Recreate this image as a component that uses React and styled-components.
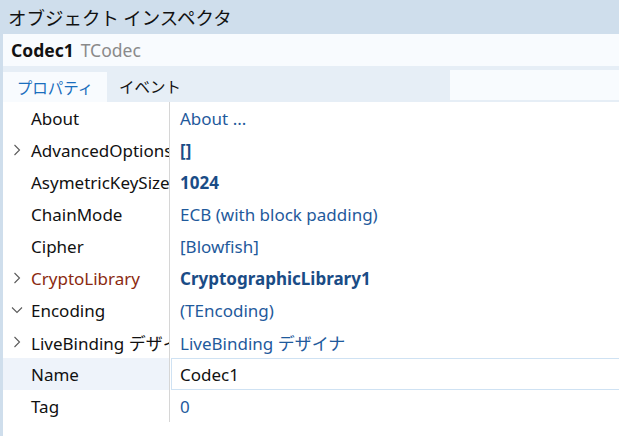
import React from "react";
import styled, { createGlobalStyle } from "styled-components";

const GlobalStyle = createGlobalStyle`
  html, body {
    margin: 0;
    padding: 0;
    background: #ffffff;
  }
  body {
    font-family: "Noto Sans", "Noto Sans CJK JP", sans-serif;
  }
`;

const Frame = styled.div`
  width: 619px;
  height: 436px;
  overflow: hidden;
  display: flex;
  flex-direction: column;
  background: #cfdeec;
`;

const TitleBar = styled.div`
  height: 34px;
  display: flex;
  align-items: center;
  padding-left: 8px;
  font-size: 18.5px;
  color: #111;
  font-family: "Noto Sans CJK JP", sans-serif;
`;

const Body = styled.div`
  flex: 1;
  margin-left: 3px;
  display: flex;
  flex-direction: column;
  background: #ffffff;
`;

const ComponentBar = styled.div`
  height: 32px;
  display: flex;
  align-items: center;
  gap: 7px;
  padding-left: 8px;
  background: #f8fbfe;
  font-size: 17.5px;
`;

const CompName = styled.span`
  font-weight: 700;
  color: #111;
`;

const CompType = styled.span`
  color: #8a8a8a;
`;

const TabBar = styled.div`
  height: 36px;
  display: flex;
  align-items: flex-end;
  background: #e6eef6;
  font-family: "Noto Sans CJK JP", sans-serif;
  font-size: 15.5px;
`;

const Tab = styled.div`
  height: ${(p) => (p.$active ? "30px" : "32px")};
  width: ${(p) => p.$width}px;
  display: flex;
  align-items: center;
  justify-content: center;
  background: ${(p) => (p.$active ? "#f8fbfe" : "transparent")};
  color: ${(p) => (p.$active ? "#1a6ebd" : "#111")};
`;

const Search = styled.div`
  margin-left: auto;
  align-self: center;
  margin-top: 2px;
  width: 169px;
  height: 30px;
  background: #f8fbfe;
`;

const Grid = styled.div`
  display: flex;
  flex-direction: column;
`;

const Row = styled.div`
  height: 32px;
  display: grid;
  grid-template-columns: 167px 1fr;
  font-size: 17px;
`;

const NameCell = styled.div`
  display: flex;
  align-items: center;
  overflow: hidden;
  white-space: nowrap;
  border-right: 1px solid #d6d6d6;
  background: ${(p) => (p.$selected ? "#eef3fa" : "transparent")};
  color: ${(p) => p.$color || "#111"};
`;

const Arrow = styled.span`
  width: 28px;
  flex: none;
  display: flex;
  align-items: center;
  padding-left: 8px;
  box-sizing: border-box;
`;

const ValueCell = styled.div`
  display: flex;
  align-items: center;
  padding-left: ${(p) => (p.$edit ? "8px" : "10px")};
  margin-left: ${(p) => (p.$edit ? "1px" : "0")};
  white-space: nowrap;
  color: ${(p) => (p.$edit ? "#111" : p.$bold ? "#1a4c86" : "#1f5a9c")};
  font-weight: ${(p) => (p.$bold ? 700 : 400)};
  border-top: ${(p) => (p.$edit ? "1px solid #cfe2f3" : "none")};
  border-bottom: ${(p) => (p.$edit ? "1px solid #cfe2f3" : "none")};
  border-left: ${(p) => (p.$edit ? "1px solid #cfe2f3" : "none")};
`;

const Chevron = ({ open }) => (
  <svg width="12" height="12" viewBox="0 0 12 12">
    <path
      d={open ? "M1 3.5 L6 8.5 L11 3.5" : "M3.5 1 L8.5 6 L3.5 11"}
      fill="none"
      stroke="#5a5a5a"
      strokeWidth="1.1"
    />
  </svg>
);

const rows = [
  { name: "About", value: "About ..." },
  { name: "AdvancedOptions", value: "[]", bold: true, arrow: "closed" },
  { name: "AsymetricKeySize", value: "1024", bold: true },
  { name: "ChainMode", value: "ECB (with block padding)" },
  { name: "Cipher", value: "[Blowfish]" },
  { name: "CryptoLibrary", value: "CryptographicLibrary1", bold: true, arrow: "closed", color: "#8b2a10" },
  { name: "Encoding", value: "(TEncoding)", arrow: "open" },
  { name: "LiveBinding デザイナ", value: "LiveBinding デザイナ", arrow: "closed" },
  { name: "Name", value: "Codec1", selected: true },
  { name: "Tag", value: "0" },
];

export default function App() {
  return (
    <>
      <GlobalStyle />
      <Frame>
        <TitleBar>オブジェクト インスペクタ</TitleBar>
        <Body>
          <ComponentBar>
            <CompName>Codec1</CompName>
            <CompType>TCodec</CompType>
          </ComponentBar>
          <TabBar>
            <Tab $active $width={104}>プロパティ</Tab>
            <Tab $width={86}>イベント</Tab>
            <Search />
          </TabBar>
          <Grid>
            {rows.map((r) => (
              <Row key={r.name}>
                <NameCell $selected={r.selected} $color={r.color}>
                  <Arrow>{r.arrow && <Chevron open={r.arrow === "open"} />}</Arrow>
                  {r.name}
                </NameCell>
                <ValueCell $bold={r.bold} $edit={r.selected}>
                  {r.value}
                </ValueCell>
              </Row>
            ))}
          </Grid>
        </Body>
      </Frame>
    </>
  );
}
